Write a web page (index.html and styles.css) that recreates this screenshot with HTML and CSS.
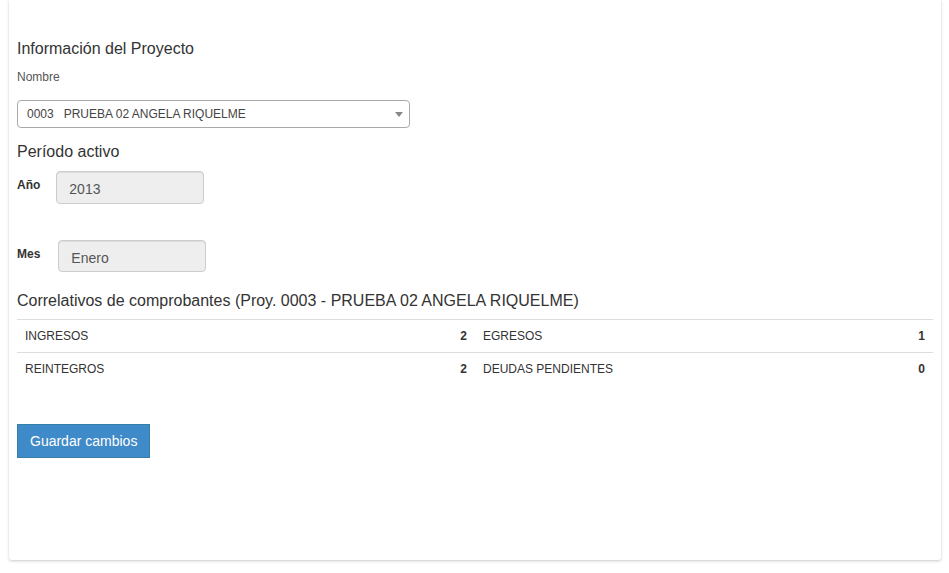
FILE: index.html
```html
<!DOCTYPE html>
<html lang="es">
<head>
<meta charset="utf-8">
<title>Información del Proyecto</title>
<link rel="stylesheet" href="styles.css">
</head>
<body>
<div class="page">
  <div class="card">
    <h4 class="section-title">Información del Proyecto</h4>
    <label class="field-label">Nombre</label>
    <div class="select">
      <span class="select-text">0003&nbsp;&nbsp;&nbsp;PRUEBA 02 ANGELA RIQUELME</span>
      <span class="select-arrow"></span>
    </div>

    <h4 class="section-title period-title">Período activo</h4>
    <div class="inline-field year-field">
      <label class="inline-label">Año</label>
      <input class="readonly-input" type="text" value="2013" readonly>
    </div>
    <div class="inline-field month-field">
      <label class="inline-label">Mes</label>
      <input class="readonly-input" type="text" value="Enero" readonly>
    </div>

    <h4 class="section-title corr-title">Correlativos de comprobantes (Proy. 0003 - PRUEBA 02 ANGELA RIQUELME)</h4>
    <table class="corr-table">
      <colgroup>
        <col class="c-label"><col class="c-value"><col class="c-label"><col class="c-value">
      </colgroup>
      <tbody>
        <tr>
          <td>INGRESOS</td><td class="num">2</td>
          <td>EGRESOS</td><td class="num">1</td>
        </tr>
        <tr>
          <td>REINTEGROS</td><td class="num">2</td>
          <td>DEUDAS PENDIENTES</td><td class="num">0</td>
        </tr>
      </tbody>
    </table>

    <button class="btn-primary" type="button">Guardar cambios</button>
  </div>
</div>
</body>
</html>
```

FILE: styles.css
```css
* { box-sizing: border-box; }

html, body {
  margin: 0;
  padding: 0;
  background: #fff;
}

body {
  font-family: "Liberation Sans", Arial, Helvetica, sans-serif;
  color: #333;
  font-size: 12px;
}

.page {
  padding: 0 8px 13px 9px;
}

.card {
  width: 932px;
  background: #fff;
  border-radius: 0 0 3px 3px;
  box-shadow: 0 1px 3px rgba(0, 0, 0, 0.22);
  padding: 39px 8px 102px 8px;
}

.section-title {
  margin: 0;
  font-size: 16px;
  line-height: 20px;
  font-weight: normal;
  color: #333;
}

.field-label {
  display: block;
  margin-top: 10px;
  font-size: 12px;
  line-height: 16px;
  color: #555;
}

.select {
  margin-top: 15px;
  width: 393px;
  height: 28px;
  border: 1px solid #aaa;
  border-radius: 4px;
  background: #fff;
  display: flex;
  align-items: center;
  justify-content: space-between;
  padding: 0 6px 0 9px;
}

.select-text {
  font-size: 12px;
  color: #444;
  line-height: 16px;
}

.select-arrow {
  width: 0;
  height: 0;
  border-style: solid;
  border-width: 5px 4px 0 4px;
  border-color: #888 transparent transparent transparent;
}

.period-title {
  margin-top: 14px;
}

.inline-field {
  display: flex;
  align-items: flex-start;
  gap: 16px;
}

.year-field { margin-top: 9px; }
.month-field { margin-top: 36px; gap: 18px; }

.inline-label {
  margin-top: 6px;
  font-size: 12px;
  line-height: 16px;
  font-weight: bold;
  color: #333;
}

.readonly-input {
  width: 148px;
  height: 33px;
  margin: 0;
  padding: 7px 12px 4px 12px;
  border: 1px solid #ccc;
  border-radius: 4px;
  background: #eee;
  box-shadow: inset 0 1px 1px rgba(0, 0, 0, 0.075);
  font-family: "Liberation Sans", Arial, Helvetica, sans-serif;
  font-size: 14px;
  line-height: 20px;
  color: #555;
  outline: none;
}

.month-field .readonly-input {
  height: 32px;
  padding-bottom: 3px;
}

.corr-title {
  margin-top: 19px;
}

.corr-table {
  margin-top: 8px;
  width: 100%;
  border-collapse: collapse;
  table-layout: fixed;
}

.c-label { width: 400px; }
.c-value { width: 58px; }

.corr-table td {
  border-top: 1px solid #ddd;
  padding: 8px;
  font-size: 12px;
  line-height: 16px;
  color: #333;
}

.corr-table td.num {
  text-align: right;
  font-weight: bold;
}

.btn-primary {
  display: block;
  margin-top: 39px;
  height: 34px;
  padding: 6px 12px;
  border: 1px solid #367fa9;
  border-radius: 0;
  background: #3f8ac8;
  color: #fff;
  font-family: "Liberation Sans", Arial, Helvetica, sans-serif;
  font-size: 14px;
  line-height: 20px;
  cursor: pointer;
}
```
